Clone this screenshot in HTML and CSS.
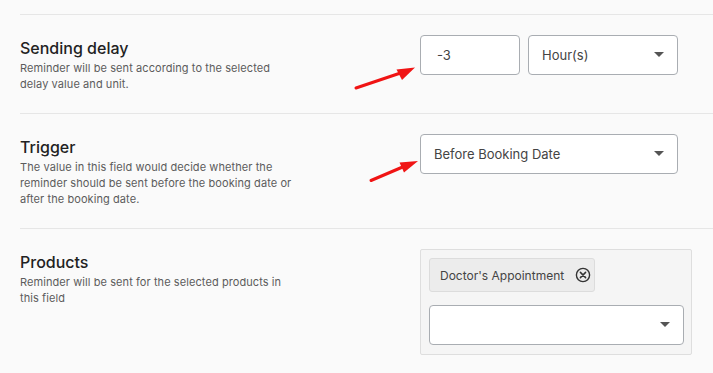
FILE: index.html
```html
<!DOCTYPE html>
<html lang="en">
<head>
<meta charset="utf-8">
<title>Reminder settings</title>
<link rel="stylesheet" href="styles.css">
</head>
<body>
<div class="page">
  <div class="settings">
    <section class="row">
      <div class="info">
        <h3 class="title">Sending delay</h3>
        <p class="desc">Reminder will be sent according to the selected delay value and unit.</p>
      </div>
      <div class="control">
        <div class="field-group">
          <div class="input input-num">-3</div>
          <div class="select select-unit"><span>Hour(s)</span><i class="caret"></i></div>
        </div>
      </div>
    </section>
    <section class="row">
      <div class="info">
        <h3 class="title">Trigger</h3>
        <p class="desc">The value in this field would decide whether the reminder should be sent before the booking date or after the booking date.</p>
      </div>
      <div class="control">
        <div class="select select-wide"><span>Before Booking Date</span><i class="caret"></i></div>
      </div>
    </section>
    <section class="row">
      <div class="info">
        <h3 class="title">Products</h3>
        <p class="desc">Reminder will be sent for the selected products in this field</p>
      </div>
      <div class="control">
        <div class="multi">
          <div class="chip">
            <span>Doctor's Appointment</span>
            <svg class="chip-x" width="16" height="16" viewBox="0 0 16 16" aria-hidden="true">
              <circle cx="8" cy="8" r="6.6" fill="none" stroke="#333" stroke-width="1.4"/>
              <path d="M5.4 5.4 L10.6 10.6 M10.6 5.4 L5.4 10.6" stroke="#333" stroke-width="1.5" stroke-linecap="round"/>
            </svg>
          </div>
          <div class="select select-multi"><span></span><i class="caret"></i></div>
        </div>
      </div>
    </section>
  </div>
  <svg class="annotations" width="713" height="373" viewBox="0 0 713 373" aria-hidden="true">
    <line x1="356" y1="88" x2="402" y2="72.5" stroke="#f01414" stroke-width="3" stroke-linecap="round"/>
    <polygon points="415,67.5 396.5,69.5 402,80" fill="#f01414"/>
    <line x1="371" y1="180.5" x2="405" y2="166" stroke="#f01414" stroke-width="3" stroke-linecap="round"/>
    <polygon points="418,161 399.5,162.5 404,172.5" fill="#f01414"/>
  </svg>
</div>
</body>
</html>
```

FILE: styles.css
```css
* { box-sizing: border-box; }
html, body {
  margin: 0;
  padding: 0;
  background: #fafafa;
}
body {
  font-family: Inter, "Noto Sans", "Liberation Sans", sans-serif;
  color: #222;
}
.page {
  position: relative;
  width: 713px;
  height: 373px;
  overflow: hidden;
}
.settings {
  padding-top: 14px;
  padding-left: 20px;
}
.row {
  display: flex;
  border-top: 1px solid #e6e6e6;
  padding: 20px 0 21.5px;
}
.info {
  width: 400px;
  flex: none;
  padding-top: 2.5px;
}
.title {
  margin: 0;
  font-size: 16px;
  line-height: 20px;
  font-weight: 500;
  color: #222;
}
.desc {
  margin: 2px 0 0;
  max-width: 272px;
  font-size: 11px;
  line-height: 16px;
  letter-spacing: 0.08px;
  color: #5c5c5c;
}
.control {
  flex: none;
}
.field-group {
  display: flex;
  gap: 8px;
}
.input, .select {
  height: 39.5px;
  border: 1px solid #a9adb2;
  border-radius: 4px;
  background: #fff;
  font-size: 13px;
  color: #444;
  display: flex;
  align-items: center;
}
.input-num {
  width: 100px;
  padding-left: 16px;
}
.select {
  justify-content: space-between;
  padding: 0 13px 0 13px;
}
.select-unit { width: 150px; }
.select-wide { width: 258px; }
.caret {
  width: 0;
  height: 0;
  border-left: 5px solid transparent;
  border-right: 5px solid transparent;
  border-top: 5px solid #555;
}
.multi {
  width: 272px;
  height: 106px;
  border: 1px solid #dedede;
  border-radius: 2px;
  background: #f5f5f5;
  padding: 8px 7px 0 8px;
  display: flex;
  flex-direction: column;
  align-items: flex-start;
  gap: 13px;
}
.chip {
  height: 34px;
  display: flex;
  align-items: center;
  gap: 11px;
  padding: 0 3px 0 10px;
  background: #ececec;
  border: 1px solid #dcdcdc;
  border-radius: 3px;
  font-size: 12px;
  color: #444;
}
.chip-x { display: block; }
.select-multi {
  width: 255px;
}
.annotations {
  position: absolute;
  left: 0;
  top: 0;
  pointer-events: none;
}
```
